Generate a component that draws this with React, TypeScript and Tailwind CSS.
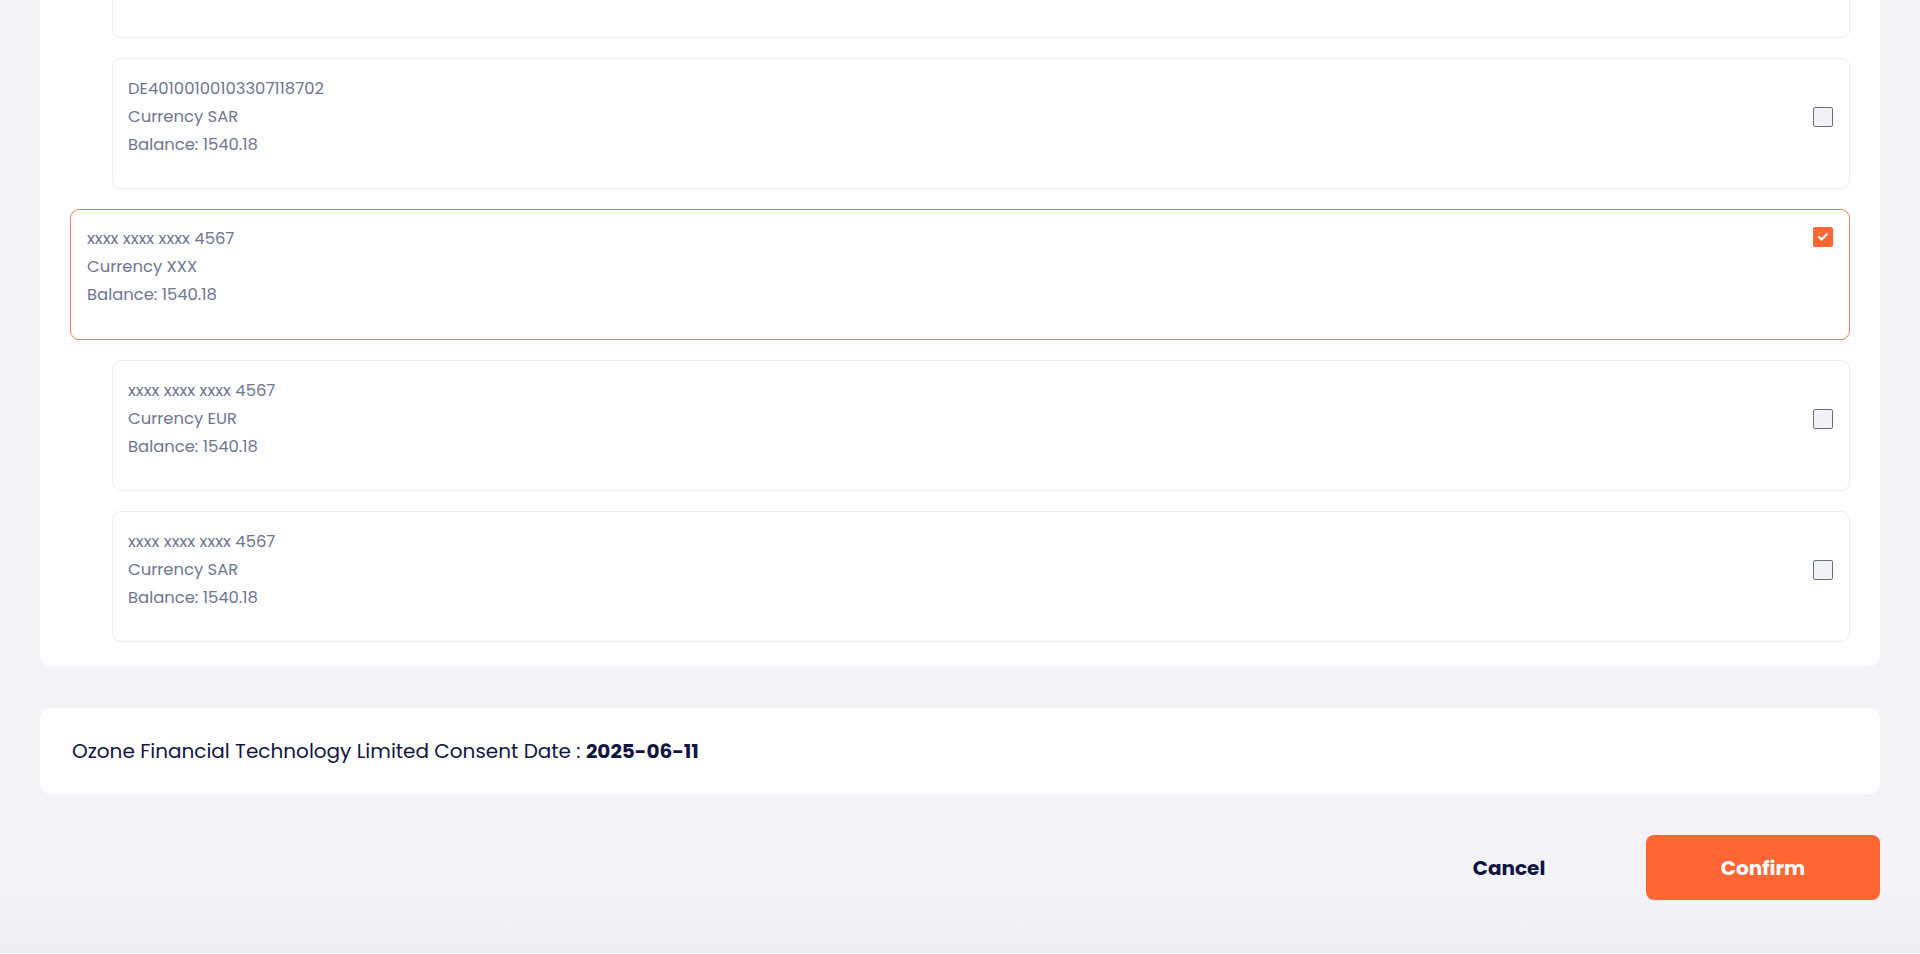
import { Check } from "lucide-react";

type Account = {
  id: string;
  number: string;
  currency: string;
  balance: string;
  selected?: boolean;
};

const accounts: Account[] = [
  { id: "a1", number: "DE40100100103307118702", currency: "Currency SAR", balance: "Balance: 1540.18" },
  { id: "a2", number: "xxxx xxxx xxxx 4567", currency: "Currency XXX", balance: "Balance: 1540.18", selected: true },
  { id: "a3", number: "xxxx xxxx xxxx 4567", currency: "Currency EUR", balance: "Balance: 1540.18" },
  { id: "a4", number: "xxxx xxxx xxxx 4567", currency: "Currency SAR", balance: "Balance: 1540.18" },
];

function Checkbox({ checked }: { checked?: boolean }) {
  if (checked) {
    return (
      <span className="flex h-5 w-5 shrink-0 items-center justify-center rounded-[2px] bg-[#ff6633]">
        <Check className="h-3 w-3 text-white" strokeWidth={4.5} />
      </span>
    );
  }
  return <span className="block h-5 w-5 shrink-0 rounded-[2px] border-[1.5px] border-[#6b7080] bg-[#f1f2f5]" />;
}

function AccountCard({ account }: { account: Account }) {
  const sel = account.selected;
  return (
    <div
      className={
        sel
          ? "flex h-[131px] items-start rounded-[9px] border-[1.5px] border-[#ff7a4d] bg-white px-4 pt-[15px]"
          : "ml-[42px] flex h-[131px] items-start rounded-[9px] border border-[#ececf0] bg-white pl-[15px] pr-4 pt-4"
      }
    >
      <div className={sel ? "flex w-full items-start justify-between" : "flex w-full items-center justify-between"}>
        <div className="flex flex-col text-[16.4px] leading-[28px] text-[#6f7593]">
          <span>{account.number}</span>
          <span>{account.currency}</span>
          <span>{account.balance}</span>
        </div>
        <div className={sel ? "pt-[2px]" : ""}>
          <Checkbox checked={sel} />
        </div>
      </div>
    </div>
  );
}

export default function App() {
  return (
    <div className="min-h-screen bg-[#f3f3f7] bg-gradient-to-b from-[#f3f3f7] from-95% to-[#ededf2] px-10 font-['Poppins','Inter',sans-serif]">
      {/* Account list panel (scrolled, top cut off) */}
      <div className="-mt-[123px] flex flex-col gap-5 rounded-[10px] bg-white pb-6 pl-[30px] pr-[30px] pt-[30px]">
        {/* card scrolled above the viewport */}
        <div className="ml-[42px] h-[131px] rounded-[9px] border border-[#ececf0] bg-white" />
        {accounts.map((a) => (
          <AccountCard key={a.id} account={a} />
        ))}
      </div>

      {/* Consent date */}
      <div className="mt-[42px] flex h-[86px] items-center rounded-[10px] bg-white px-8">
        <p className="text-[20px] text-[#111543]">
          Ozone Financial Technology Limited Consent Date : <span className="font-bold">2025-06-11</span>
        </p>
      </div>

      {/* Actions */}
      <div className="mt-[41px] flex justify-end gap-5 pb-[53px]">
        <button className="h-[65px] w-[234px] rounded-[8px] text-[20px] font-bold text-[#111543]">Cancel</button>
        <button className="h-[65px] w-[234px] rounded-[8px] bg-[#ff6633] text-[20px] font-bold text-white">
          Confirm
        </button>
      </div>
    </div>
  );
}
